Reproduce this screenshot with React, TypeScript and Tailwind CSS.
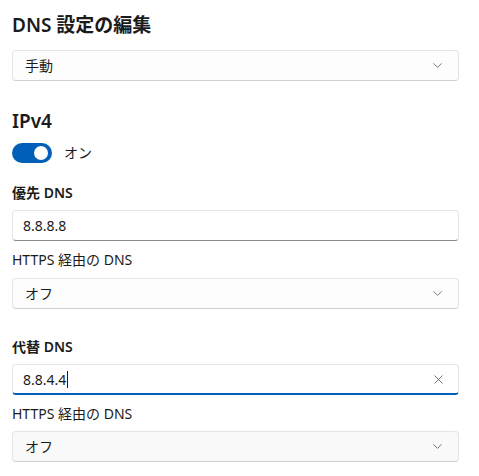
import { ChevronDown, X } from 'lucide-react';

const FONT = { fontFamily: '"Noto Sans", "Noto Sans CJK JP", sans-serif' };

function Select({ value, dim }: { value: string; dim?: boolean }) {
  return (
    <div
      className={`flex h-[31px] items-center justify-between rounded-[4px] border border-[#e5e5e5] border-b-[#d1d1d1] pl-[12px] pr-[12px] ${
        dim ? 'bg-[#f9f9f9]' : 'bg-[#fdfdfd]'
      }`}
    >
      <span className="text-[14px] text-[#1b1b1b]">{value}</span>
      <ChevronDown size={15} strokeWidth={1.2} className="mr-[1px] text-[#4a4a4a]" />
    </div>
  );
}

function TextBox({ value, focused }: { value: string; focused?: boolean }) {
  return (
    <div
      className={`flex h-[31px] items-center justify-between rounded-[4px] border border-[#e5e5e5] bg-white pl-[10px] pr-[12px] ${
        focused ? 'border-b-2 border-b-[#005fb8]' : 'border-b-[#8a8a8a]'
      }`}
    >
      <span className="flex items-center text-[14px] text-[#1b1b1b]">
        {value}
        {focused && <span className="ml-[1px] inline-block h-[17px] w-px bg-[#1b1b1b]" />}
      </span>
      {focused && <X size={15} strokeWidth={1.2} className="text-[#4a4a4a]" />}
    </div>
  );
}

export default function App() {
  return (
    <div className="min-h-[476px] w-[479px] bg-white pl-[12px] pr-[20px] pt-[11px]" style={FONT}>
      <h1 className="text-[19px] font-semibold leading-[28px] text-[#1b1b1b]">DNS 設定の編集</h1>
      <div className="mt-[11px]">
        <Select value="手動" />
      </div>

      <h2 className="mt-[26px] text-[19px] font-semibold leading-[28px] text-[#1b1b1b]">IPv4</h2>
      <div className="mt-[7px] flex items-center gap-[12px]">
        <div className="flex h-[20px] w-[40px] items-center justify-end rounded-full bg-[#005fb8] pr-[4px]">
          <div className="h-[14px] w-[14px] rounded-full bg-white" />
        </div>
        <span className="text-[14px] text-[#1b1b1b]">オン</span>
      </div>

      <p className="mt-[20px] text-[14px] font-semibold leading-[20px] text-[#1b1b1b]">優先 DNS</p>
      <div className="mt-[7px]">
        <TextBox value="8.8.8.8" />
      </div>
      <p className="mt-[9px] text-[14px] leading-[20px] text-[#1b1b1b]">HTTPS 経由の DNS</p>
      <div className="mt-[8px]">
        <Select value="オフ" />
      </div>

      <p className="mt-[28px] text-[14px] font-semibold leading-[20px] text-[#1b1b1b]">代替 DNS</p>
      <div className="mt-[7px]">
        <TextBox value="8.8.4.4" focused />
      </div>
      <p className="mt-[9px] text-[14px] leading-[20px] text-[#1b1b1b]">HTTPS 経由の DNS</p>
      <div className="mt-[7px]">
        <Select value="オフ" dim />
      </div>
    </div>
  );
}
